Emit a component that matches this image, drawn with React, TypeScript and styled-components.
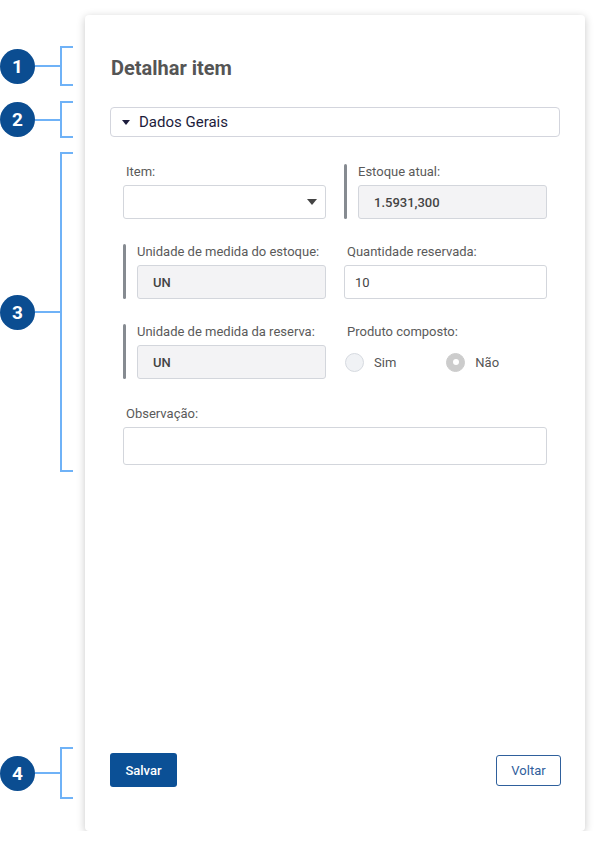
import styled, { createGlobalStyle } from "styled-components";

const GlobalStyle = createGlobalStyle`
  body {
    margin: 0;
    background: #ffffff;
    font-family: Roboto, "Liberation Sans", Arial, sans-serif;
  }
`;

const Page = styled.div`
  display: flex;
  align-items: flex-start;
  width: 601px;
  padding-top: 15px;
`;

const Rail = styled.div`
  display: flex;
  flex-direction: column;
  width: 85px;
  flex-shrink: 0;
  margin-top: -15px;
`;

const Marker = styled.div<{ $top: number; $height: number }>`
  display: flex;
  align-items: center;
  margin-top: ${(p) => p.$top}px;
  height: ${(p) => p.$height}px;
`;

const Badge = styled.div`
  width: 35px;
  height: 35px;
  border-radius: 50%;
  background: #0b4d91;
  color: #ffffff;
  font-size: 19px;
  font-weight: 700;
  display: flex;
  align-items: center;
  justify-content: center;
  flex-shrink: 0;
`;

const Connector = styled.div`
  width: 25px;
  height: 2px;
  background: #6fb2f7;
`;

const Bracket = styled.div`
  width: 11px;
  align-self: stretch;
  border: 2px solid #6fb2f7;
  border-right: none;
`;

const Card = styled.div`
  width: 500px;
  height: 816px;
  box-sizing: border-box;
  background: #ffffff;
  border-radius: 4px;
  box-shadow: 0 2px 8px rgba(0, 0, 0, 0.22);
  padding: 0 25px 44px 25px;
  display: flex;
  flex-direction: column;
`;

const Title = styled.h1`
  margin: 41px 0 0 1px;
  font-size: 20px;
  line-height: 24px;
  font-weight: 700;
  color: #555555;
`;

const Accordion = styled.div`
  margin-top: 27px;
  height: 30px;
  box-sizing: border-box;
  border: 1px solid #d3d5dd;
  border-radius: 4px;
  display: flex;
  align-items: center;
  padding-left: 11px;
  gap: 9px;
  font-size: 15px;
  color: #1c1c3c;
`;

const Caret = styled.span`
  width: 0;
  height: 0;
  border-left: 4px solid transparent;
  border-right: 4px solid transparent;
  border-top: 5px solid #1c1c3c;
`;

const Form = styled.div`
  margin: 27px 13px 0 13px;
  display: grid;
  grid-template-columns: 203px 203px;
  column-gap: 18px;
  row-gap: 25px;
`;

const Field = styled.div<{ $wide?: boolean }>`
  display: flex;
  gap: 11px;
  grid-column: ${(p) => (p.$wide ? "1 / span 2" : "auto")};
  margin-top: ${(p) => (p.$wide ? "2px" : "0")};
`;

const Bar = styled.div`
  width: 3px;
  border-radius: 2px;
  background: #868b91;
  flex-shrink: 0;
`;

const FieldBody = styled.div`
  flex: 1;
  display: flex;
  flex-direction: column;
`;

const Label = styled.div<{ $indent?: boolean }>`
  font-size: 13px;
  line-height: 15px;
  color: #5a5a5a;
  margin-bottom: 6px;
  padding-left: ${(p) => (p.$indent ? "3px" : "0")};
`;

const Box = styled.div<{ $readOnly?: boolean; $tall?: boolean }>`
  height: ${(p) => (p.$tall ? "38px" : "34px")};
  box-sizing: border-box;
  border: 1px solid #d3d6dc;
  border-radius: 3px;
  background: ${(p) => (p.$readOnly ? "#f3f3f5" : "#ffffff")};
  display: flex;
  align-items: center;
  justify-content: space-between;
  padding: 0 8px 0 ${(p) => (p.$readOnly ? "15px" : "10px")};
  font-size: 13px;
  font-weight: ${(p) => (p.$readOnly ? 500 : 400)};
  color: #444444;
`;

const SelectArrow = styled.span`
  margin-left: auto;
  width: 0;
  height: 0;
  border-left: 5px solid transparent;
  border-right: 5px solid transparent;
  border-top: 6px solid #444444;
`;

const RadioRow = styled.div`
  height: 34px;
  display: flex;
  align-items: center;
  gap: 50px;
  padding-left: 1px;
`;

const RadioOption = styled.label`
  display: flex;
  align-items: center;
  gap: 10px;
  font-size: 13px;
  color: #555555;
`;

const RadioDot = styled.span<{ $checked?: boolean }>`
  width: 19px;
  height: 19px;
  box-sizing: border-box;
  border-radius: 50%;
  border: 1px solid ${(p) => (p.$checked ? "#cccccc" : "#d6dae0")};
  background: ${(p) => (p.$checked ? "#cccccc" : "#f0f2f5")};
  display: flex;
  align-items: center;
  justify-content: center;

  &::after {
    content: "";
    display: ${(p) => (p.$checked ? "block" : "none")};
    width: 6px;
    height: 6px;
    border-radius: 50%;
    background: #ffffff;
  }
`;

const Footer = styled.div`
  margin-top: auto;
  display: flex;
  justify-content: space-between;
  align-items: center;
`;

const PrimaryButton = styled.button`
  height: 34px;
  width: 67px;
  border: none;
  border-radius: 3px;
  background: #0b5096;
  color: #ffffff;
  font-family: inherit;
  font-size: 13px;
  font-weight: 500;
`;

const OutlineButton = styled.button`
  height: 31px;
  width: 65px;
  margin-right: -1px;
  box-sizing: border-box;
  border: 1px solid #2f609c;
  border-radius: 3px;
  background: #ffffff;
  color: #2f609c;
  font-family: inherit;
  font-size: 13px;
`;

const markers = [
  { n: 1, top: 46, height: 40 },
  { n: 2, top: 15, height: 37 },
  { n: 3, top: 14, height: 320 },
  { n: 4, top: 275, height: 52 },
];

export default function App() {
  return (
    <>
      <GlobalStyle />
      <Page>
        <Rail>
          {markers.map((m) => (
            <Marker key={m.n} $top={m.top} $height={m.height}>
              <Badge>{m.n}</Badge>
              <Connector />
              <Bracket />
            </Marker>
          ))}
        </Rail>

        <Card>
          <Title>Detalhar item</Title>

          <Accordion>
            <Caret />
            Dados Gerais
          </Accordion>

          <Form>
            <Field>
              <FieldBody>
                <Label $indent>Item:</Label>
                <Box>
                  <SelectArrow />
                </Box>
              </FieldBody>
            </Field>

            <Field>
              <Bar />
              <FieldBody>
                <Label>Estoque atual:</Label>
                <Box $readOnly>1.5931,300</Box>
              </FieldBody>
            </Field>

            <Field>
              <Bar />
              <FieldBody>
                <Label>Unidade de medida do estoque:</Label>
                <Box $readOnly>UN</Box>
              </FieldBody>
            </Field>

            <Field>
              <FieldBody>
                <Label $indent>Quantidade reservada:</Label>
                <Box>10</Box>
              </FieldBody>
            </Field>

            <Field>
              <Bar />
              <FieldBody>
                <Label>Unidade de medida da reserva:</Label>
                <Box $readOnly>UN</Box>
              </FieldBody>
            </Field>

            <Field>
              <FieldBody>
                <Label $indent>Produto composto:</Label>
                <RadioRow>
                  <RadioOption>
                    <RadioDot />
                    Sim
                  </RadioOption>
                  <RadioOption>
                    <RadioDot $checked />
                    Não
                  </RadioOption>
                </RadioRow>
              </FieldBody>
            </Field>

            <Field $wide>
              <FieldBody>
                <Label $indent>Observação:</Label>
                <Box $tall />
              </FieldBody>
            </Field>
          </Form>

          <Footer>
            <PrimaryButton>Salvar</PrimaryButton>
            <OutlineButton>Voltar</OutlineButton>
          </Footer>
        </Card>
      </Page>
    </>
  );
}
